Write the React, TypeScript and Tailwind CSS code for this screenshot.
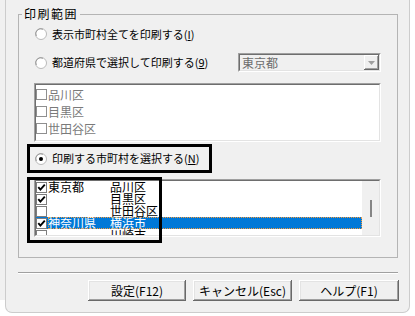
import React from 'react';

type Row = { pref: string; city: string; checked: boolean; selected?: boolean };

const rows: Row[] = [
  { pref: '東京都', city: '品川区', checked: true },
  { pref: '', city: '目黒区', checked: true },
  { pref: '', city: '世田谷区', checked: false },
  { pref: '神奈川県', city: '横浜市', checked: true, selected: true },
  { pref: '', city: '川崎市', checked: false },
];

function Radio({ checked }: { checked?: boolean }) {
  return (
    <svg width="12" height="12" viewBox="0 0 12 12" className="shrink-0">
      <circle cx="6" cy="6" r="5.5" fill="#ffffff" stroke="#b9b9b9" />
      <path d="M1.3 8 A5 5 0 0 1 8 1.3" fill="none" stroke="#9a9a9a" />
      {checked && <circle cx="6" cy="6" r="2" fill="#000000" />}
    </svg>
  );
}

function Check({ checked, disabled }: { checked?: boolean; disabled?: boolean }) {
  return (
    <svg width="11" height="11" viewBox="0 0 11 11" className="shrink-0">
      <rect x="0.5" y="0.5" width="10" height="10" fill="#ffffff" stroke={disabled ? '#8f8f8f' : '#7d7d7d'} />
      {checked && (
        <path d="M2.3 5.2 L4.4 7.6 L8.8 2.6" fill="none" stroke="#000000" strokeWidth="1.9" />
      )}
    </svg>
  );
}

function Sunken({ className, children }: { className?: string; children?: React.ReactNode }) {
  return (
    <div className={`border border-t-[#a0a0a0] border-l-[#a0a0a0] border-r-white border-b-white ${className ?? ''}`}>
      <div className="flex h-full w-full border border-t-[#6e6e6e] border-l-[#6e6e6e] border-r-[#e3e3e3] border-b-[#e3e3e3]">
        {children}
      </div>
    </div>
  );
}

function Button({ label, w }: { label: string; w: string }) {
  return (
    <button
      className={`${w} h-[21px] bg-[#f0f0f0] text-[12px] leading-[21px] text-black shadow-[inset_-1px_-1px_#696969,inset_1px_1px_#ffffff,inset_-2px_-2px_#a0a0a0,inset_2px_2px_#e3e3e3]`}
    >
      {label}
    </button>
  );
}

export default function App() {
  return (
    <div className="flex h-[316px] w-[415px] overflow-hidden bg-white font-['Noto_Sans_CJK_JP',sans-serif] text-black">
      <div className="h-[300px] w-[5px] shrink-0 bg-[#f0f0f0]" />
      <div className="flex h-[313px] w-[405px] shrink-0 flex-col rounded-b-[7px] border-x border-b border-[#cccccc] bg-[#f0f0f0]">
        <fieldset className="ml-[12px] mt-[6px] w-[380px] border border-[#b4b4b4] pb-[20px]">
          <legend className="ml-[3px] px-[2px] text-[12px] leading-[16px] tracking-[1.5px]">印刷範囲</legend>

          <div className="mt-[4px] flex h-[16px] items-center gap-[5px] pl-[16px] text-[11px]">
            <Radio />
            <span>
              表示市町村全てを印刷する(<span className="underline">I</span>)
            </span>
          </div>

          <div className="mt-[11px] flex h-[19px] items-center pl-[16px] text-[11px]">
            <Radio />
            <span className="ml-[5px]">
              都道府県で選択して印刷する(<span className="underline">9</span>)
            </span>
            <Sunken className="ml-auto mr-[16px] h-[19px] w-[143px]">
              <div className="flex-1 bg-[#f0f0f0] pl-[2px] text-[12px] leading-[15px] text-[#6d6d6d]">東京都</div>
              <div className="flex w-[15px] items-center justify-center bg-[#f0f0f0] shadow-[inset_-1px_-1px_#696969,inset_1px_1px_#ffffff,inset_-2px_-2px_#a0a0a0]">
                <svg width="7" height="4" viewBox="0 0 7 4">
                  <path d="M0 0 H7 L3.5 4 Z" fill="#a0a0a0" />
                </svg>
              </div>
            </Sunken>
          </div>

          <Sunken className="ml-[15px] mt-[11px] h-[59px] w-[347px]">
            <div className="flex flex-1 flex-col bg-white pt-[1px] text-[12px] text-[#7a7a7a]">
              {['品川区', '目黒区', '世田谷区'].map((c) => (
                <div key={c} className="flex h-[17px] items-center gap-[1px]">
                  <Check disabled />
                  <span>{c}</span>
                </div>
              ))}
            </div>
          </Sunken>

          <div className="ml-[8px] mt-[2px] flex h-[29px] w-[185px] items-center gap-[5px] border-[3px] border-black pl-[5px] text-[11px]">
            <Radio checked />
            <span>
              印刷する市町村を選択する(<span className="underline">N</span>)
            </span>
          </div>

          <div className="relative ml-[15px] mt-[6px] h-[58px] w-[347px]">
            <Sunken className="h-full w-full">
              <div className="flex-1 overflow-hidden bg-white text-[12px] leading-[12px]">
                {rows.map((r, i) => (
                  <div key={i} className={`flex h-[12px] items-center ${r.selected ? 'bg-[#0078d7] text-white' : ''}`}>
                    <div className="mr-[1px] flex">
                      <Check checked={r.checked} />
                    </div>
                    <div
                      className={`flex h-full flex-1 items-center ${r.selected ? 'outline-1 -outline-offset-1 outline-dotted outline-[#f59a3a]' : ''}`}
                    >
                      <span className="w-[62px] shrink-0 whitespace-nowrap">{r.pref}</span>
                      <span className="whitespace-nowrap">{r.city}</span>
                    </div>
                  </div>
                ))}
              </div>
              <div className="flex w-[17px] justify-center bg-[#f0f0f0] pt-[19px]">
                <div className="h-[17px] w-[2px] bg-[#858585]" />
              </div>
            </Sunken>
            <div className="absolute -left-[7px] -top-[2px] h-[66px] w-[135px] border-[3px] border-black" />
          </div>
        </fieldset>

        <div className="ml-[12px] mt-[14px] w-[380px] border-t border-b border-t-[#a0a0a0] border-b-white" />

        <div className="ml-[82px] mt-[6px] flex gap-[7px]">
          <Button label="設定(F12)" w="w-[98px]" />
          <Button label="キャンセル(Esc)" w="w-[99px]" />
          <Button label="ヘルプ(F1)" w="w-[100px]" />
        </div>
      </div>
    </div>
  );
}
